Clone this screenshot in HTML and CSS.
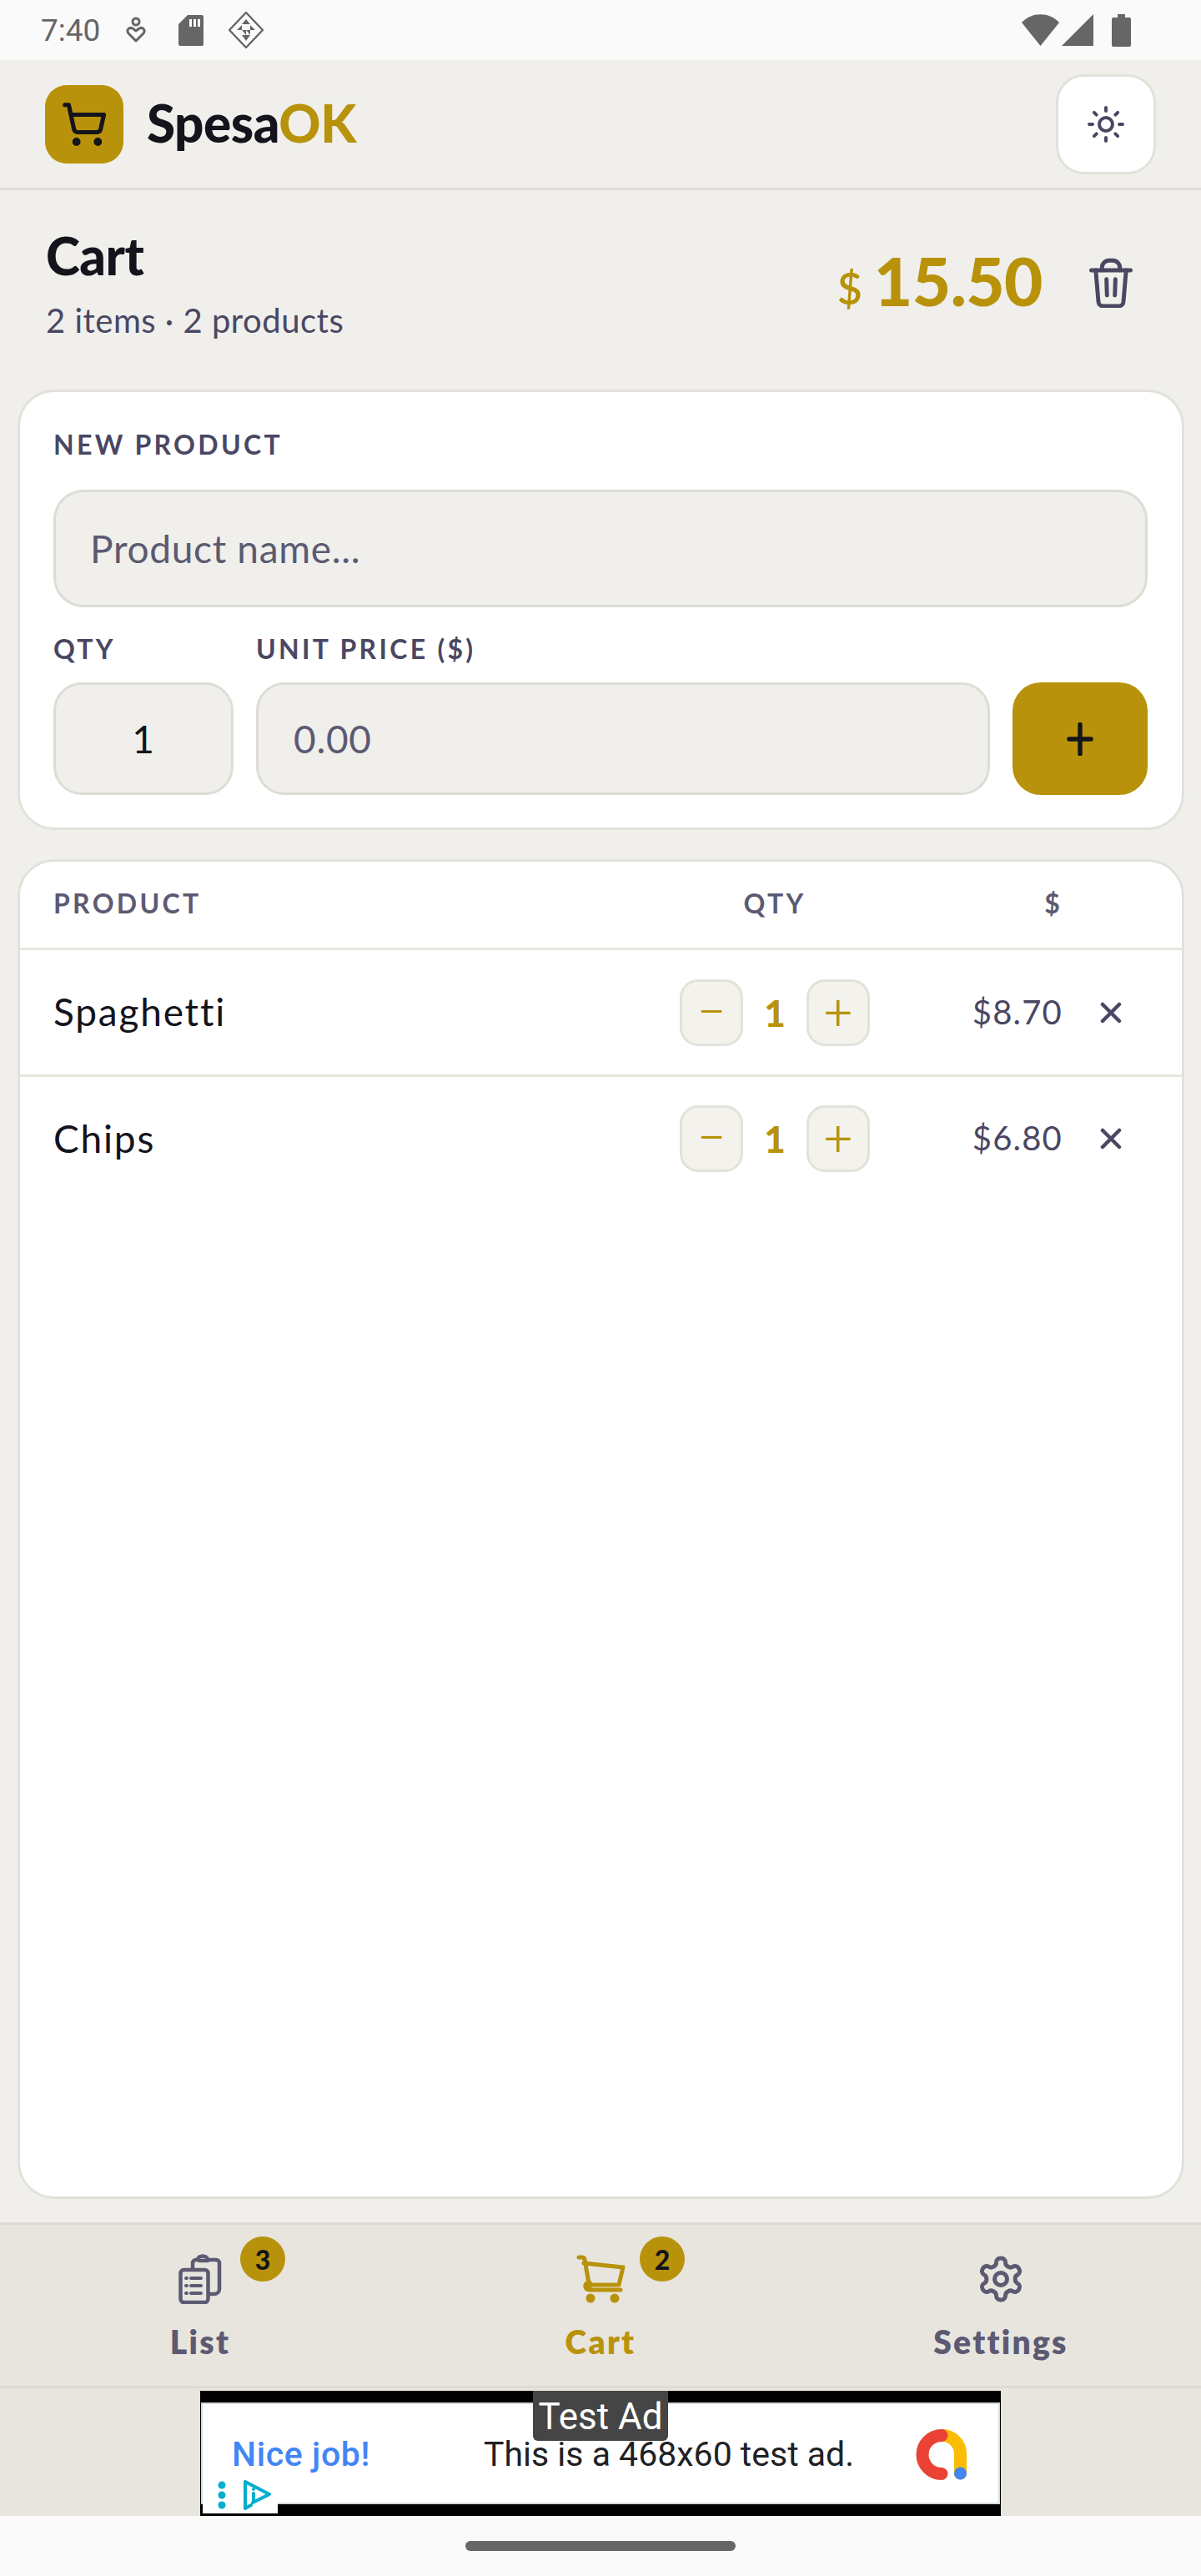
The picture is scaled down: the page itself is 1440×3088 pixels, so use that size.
FILE: index.html
```html
<!DOCTYPE html>
<html lang="en">
<head>
<meta charset="utf-8">
<title>SpesaOK</title>
<link rel="stylesheet" href="styles.css">
</head>
<body>
<div class="app">
  <div class="status">
    <div class="status-left">
      <span class="clock">7:40</span>
      <svg class="st-heart" viewBox="0 0 24 32" fill="none" stroke="#666" stroke-width="3"><circle cx="12" cy="6" r="4"/><path d="M12 29 3 20c-3-4 1-8 5-6l4 3 4-3c4-2 8 2 5 6z" stroke-linejoin="round"/></svg>
      <svg class="st-sim" viewBox="0 0 30 37"><path d="M11 0h17a2 2 0 0 1 2 2v33a2 2 0 0 1-2 2H2a2 2 0 0 1-2-2V11z" fill="#666"/><path d="M13 5h3v9h-3zM18 5h3v9h-3zM23 5h3v9h-3z" fill="#fff"/></svg>
      <svg class="st-diamond" viewBox="0 0 42 44" fill="none" stroke="#666" stroke-width="2.4"><path d="M21 1 41 22 21 43 1 22z" stroke-linejoin="round"/><path d="M21 9l5 6H16zM10 22l6-6v6zM32 22l-6-6v6zM16 22h5v6zM26 22h-5l5 6zM16 28h10l-5 7z" fill="#666" stroke="none"/></svg>
    </div>
    <div class="status-right">
      <svg class="st-wifi" viewBox="0 0 45 38"><path d="M22.500 38 0 10C12-3 33-3 45 10z" fill="#666"/></svg>
      <svg class="st-signal" viewBox="0 0 38 38"><path d="M38 0v38H0z" fill="#666"/></svg>
      <svg class="st-battery" viewBox="0 0 23 39"><path d="M7 0h9v4h5a2 2 0 0 1 2 2v31a2 2 0 0 1-2 2H2a2 2 0 0 1-2-2V6a2 2 0 0 1 2-2h5z" fill="#666"/></svg>
    </div>
  </div>

  <header class="topbar">
    <div class="brand">
      <div class="logo">
        <svg viewBox="0 0 24 24" fill="none" stroke="#14141c" stroke-width="2.200" stroke-linecap="round" stroke-linejoin="round"><circle cx="8" cy="21" r="1"/><circle cx="19" cy="21" r="1"/><path d="M2.050 2.050h2l2.660 12.420a2 2 0 0 0 2 1.580h9.780a2 2 0 0 0 1.950-1.570l1.650-7.430H5.120"/></svg>
      </div>
      <div class="wordmark">Spesa<span class="ok">OK</span></div>
    </div>
    <button class="theme-btn" type="button" aria-label="Theme">
      <svg viewBox="0 0 24 24" fill="none" stroke="#4a4763" stroke-width="2" stroke-linecap="round"><circle cx="12" cy="12" r="4"/><path d="M12 2v2M12 20v2M4.930 4.930l1.410 1.410M17.660 17.660l1.410 1.410M2 12h2M20 12h2M6.340 17.660l-1.410 1.410M19.070 4.930l-1.410 1.410"/></svg>
    </button>
  </header>

  <main class="main">
    <section class="page-head">
      <div>
        <h1 class="page-title">Cart</h1>
        <p class="page-sub">2 items · 2 products</p>
      </div>
      <div class="totals">
        <span class="cur">$</span>
        <span class="total">15.50</span>
        <svg class="trash" viewBox="0 0 24 28" fill="none" stroke="#4a4763" stroke-width="2.300" stroke-linecap="round" stroke-linejoin="round"><path d="M1 7h22"/><path d="M3.500 7l1.500 17.500A2.500 2.500 0 0 0 7.500 27h9a2.500 2.500 0 0 0 2.500-2.500L20.500 7"/><path d="M7 7V5.500A4 4 0 0 1 11 1.500h2a4 4 0 0 1 4 4V7"/><path d="M9.500 12l.3 9M14.500 12l-.3 9"/></svg>
      </div>
    </section>

    <section class="card form-card">
      <div class="label">NEW PRODUCT</div>
      <input class="field field-name" type="text" placeholder="Product name...">
      <div class="form-row">
        <div class="col-qty">
          <div class="label">QTY</div>
          <input class="field field-qty" type="text" value="1">
        </div>
        <div class="col-price">
          <div class="label">UNIT PRICE ($)</div>
          <input class="field field-price" type="text" placeholder="0.00">
        </div>
        <button class="add-btn" type="button" aria-label="Add">
          <svg viewBox="0 0 40 52" fill="none" stroke="#14141c" stroke-width="7" stroke-linecap="round"><path d="M20 3v46M3 26h34"/></svg>
        </button>
      </div>
    </section>

    <section class="card table-card">
      <div class="row head-row">
        <div class="c-name">PRODUCT</div>
        <div class="c-qty">QTY</div>
        <div class="c-price">$</div>
        <div class="c-del"></div>
      </div>
      <div class="row item-row">
        <div class="c-name item-name">Spaghetti</div>
        <div class="c-qty stepper">
          <button class="step" type="button">−</button>
          <span class="step-val">1</span>
          <button class="step" type="button">+</button>
        </div>
        <div class="c-price item-price">$8.70</div>
        <div class="c-del"><svg class="x" viewBox="0 0 26 26" fill="none" stroke="#4a4763" stroke-width="4.500" stroke-linecap="round"><path d="M3 3l20 20M23 3 3 23"/></svg></div>
      </div>
      <div class="row item-row last">
        <div class="c-name item-name">Chips</div>
        <div class="c-qty stepper">
          <button class="step" type="button">−</button>
          <span class="step-val">1</span>
          <button class="step" type="button">+</button>
        </div>
        <div class="c-price item-price">$6.80</div>
        <div class="c-del"><svg class="x" viewBox="0 0 26 26" fill="none" stroke="#4a4763" stroke-width="4.500" stroke-linecap="round"><path d="M3 3l20 20M23 3 3 23"/></svg></div>
      </div>
    </section>
  </main>

  <nav class="tabs">
    <div class="tab">
      <span class="tab-icon">
        <svg class="ic-list" viewBox="0 0 52 60" fill="none" stroke="#5c5a72" stroke-width="4.500" stroke-linecap="round" stroke-linejoin="round"><rect x="2.500" y="19" width="33" height="39" rx="4"/><path d="M17 17v-6a4 4 0 0 1 4-4h2c0-6 12-6 12 0h10a4 4 0 0 1 4 4v31a6 6 0 0 1-6 6h-6"/><path d="M25 8h10"/><path d="M15 29h12M15 38h12M15 47h12M9 29h1M9 38h1M9 47h1" stroke-width="4"/></svg>
        <span class="badge">3</span>
      </span>
      <span class="tab-label">List</span>
    </div>
    <div class="tab active">
      <span class="tab-icon">
        <svg class="ic-cart" viewBox="0 0 60 58" fill="none" stroke="#b8920a" stroke-width="5" stroke-linecap="round" stroke-linejoin="round"><path d="M4 3h4a3 3 0 0 1 3 2.500L17 40"/><path d="M10 10l47 5-5 21H16"/><path d="M17 33c-7 0-7 9 0 9h37"/><circle cx="18" cy="52" r="3" fill="#b8920a"/><circle cx="47" cy="52" r="3" fill="#b8920a"/></svg>
        <span class="badge">2</span>
      </span>
      <span class="tab-label">Cart</span>
    </div>
    <div class="tab">
      <span class="tab-icon">
        <svg class="ic-gear" viewBox="0 0 24 24" fill="none" stroke="#5c5a72" stroke-width="2" stroke-linecap="round" stroke-linejoin="round"><path d="M12.220 2h-.44a2 2 0 0 0-2 2v.18a2 2 0 0 1-1 1.730l-.43.250a2 2 0 0 1-2 0l-.150-.08a2 2 0 0 0-2.730.730l-.220.380a2 2 0 0 0 .730 2.730l.150.100a2 2 0 0 1 1 1.720v.510a2 2 0 0 1-1 1.740l-.150.090a2 2 0 0 0-.730 2.730l.220.380a2 2 0 0 0 2.730.730l.150-.08a2 2 0 0 1 2 0l.430.250a2 2 0 0 1 1 1.730V20a2 2 0 0 0 2 2h.44a2 2 0 0 0 2-2v-.18a2 2 0 0 1 1-1.730l.43-.250a2 2 0 0 1 2 0l.150.080a2 2 0 0 0 2.730-.730l.220-.390a2 2 0 0 0-.730-2.730l-.150-.080a2 2 0 0 1-1-1.740v-.500a2 2 0 0 1 1-1.740l.150-.090a2 2 0 0 0 .730-2.730l-.220-.380a2 2 0 0 0-2.730-.730l-.150.080a2 2 0 0 1-2 0l-.430-.250a2 2 0 0 1-1-1.730V4a2 2 0 0 0-2-2z"/><circle cx="12" cy="12" r="3"/></svg>
      </span>
      <span class="tab-label">Settings</span>
    </div>
  </nav>

  <div class="ad-strip">
    <div class="ad">
      <div class="ad-bar"></div>
      <div class="ad-body">
        <span class="ad-nice">Nice job!</span>
        <span class="ad-text">This is a 468x60 test ad.</span>
        <svg class="ad-logo" viewBox="0 0 62 62" fill="none" stroke-width="15" stroke-linecap="round"><path d="M31 7.500A22 22 0 0 1 53.500 29v24" stroke="#fbbc04"/><path d="M31 53.500a23 23 0 0 1 0-46" stroke="#ea4335"/><circle cx="53.500" cy="53" r="7.500" fill="#4285f4"/></svg>
      </div>
      <div class="ad-bar"></div>
      <span class="ad-tag">Test Ad</span>
      <span class="ad-choices">
        <svg class="ad-dots" viewBox="0 0 10 34" fill="#00aecd"><circle cx="5" cy="5" r="4.500"/><circle cx="5" cy="17" r="4.500"/><circle cx="5" cy="29" r="4.500"/></svg>
        <svg class="ad-tri" viewBox="0 0 36 38" fill="none" stroke="#00aecd" stroke-width="4" stroke-linejoin="round" stroke-linecap="round"><path d="M12 28 32 18 3 3v32l7-4"/><path d="M13 17v9"/><circle cx="13" cy="12" r="1" fill="#00aecd" stroke-width="2"/></svg>
      </span>
    </div>
  </div>

  <div class="gesture"><span class="gesture-bar"></span></div>
</div>
</body>
</html>
```

FILE: styles.css
```css
* { box-sizing: border-box; }
html, body { margin: 0; height: 100%; }
body {
  font-family: "Lato", "Noto Sans", sans-serif;
  color: #14141c;
  background: #f0efeb;
}
button { font-family: inherit; padding: 0; }
.app { display: flex; flex-direction: column; height: 100vh; }

/* status bar */
.status {
  height: 72px;
  flex: none;
  background: #fafafa;
  display: flex;
  justify-content: space-between;
  align-items: center;
  padding: 0 84px 0 49px;
}
.status-left, .status-right { display: flex; align-items: center; }
.clock { font: 400 37px/1 "Roboto", sans-serif; color: #666; width: 102px; }
.st-heart { width: 24px; height: 32px; margin-right: 39px; }
.st-sim { width: 30px; height: 37px; margin-right: 30px; }
.st-diamond { width: 42px; height: 44px; }
.st-wifi { width: 45px; height: 38px; margin-right: 3px; }
.st-signal { width: 38px; height: 38px; margin-right: 22px; }
.st-battery { width: 23px; height: 39px; }

/* top bar */
.topbar {
  height: 156px;
  flex: none;
  display: flex;
  justify-content: space-between;
  align-items: center;
  padding: 0 54px;
  background: #f0efeb;
  border-bottom: 3px solid #dddcd5;
}
.brand { display: flex; align-items: center; gap: 28px; }
.logo {
  width: 94px;
  height: 94px;
  border-radius: 26px;
  background: #b8920a;
  display: flex;
  align-items: center;
  justify-content: center;
}
.logo svg { width: 56px; height: 56px; }
.wordmark { font-size: 62px; font-weight: 900; letter-spacing: -.5px; line-height: 1; margin-top: -4px; }
.ok { color: #b8920a; }
.theme-btn {
  width: 120px;
  height: 120px;
  border-radius: 34px;
  border: 3px solid #e2e1da;
  background: #fff;
  display: flex;
  align-items: center;
  justify-content: center;
}
.theme-btn svg { width: 48px; height: 48px; }

/* page */
.main {
  flex: 1;
  min-height: 0;
  display: flex;
  flex-direction: column;
  padding: 0 20px 28px 21px;
}
.page-head {
  height: 239px;
  flex: none;
  display: flex;
  justify-content: space-between;
  align-items: center;
  padding: 0 62px 18px 34px;
}
.page-title { margin: 0 0 20px; font-size: 62px; font-weight: 900; line-height: 70px; letter-spacing: -.5px; }
.page-sub { margin: 0; font-size: 40px; line-height: 46px; letter-spacing: .5px; color: #4a4763; }
.totals { display: flex; align-items: center; }
.cur { font-size: 52px; font-weight: 600; color: #b8920a; margin: 12px 14px 0 0; }
.total { font-size: 80px; font-weight: 900; color: #b8920a; line-height: 1; margin-right: 56px; letter-spacing: -.5px; margin-top: -5px; }
.trash { width: 52px; height: 60px; }

.card {
  background: #fff;
  border: 3px solid #e2e1da;
  border-radius: 44px;
}
.form-card {
  height: 528px;
  flex: none;
  padding: 45px 41px 0 40px;
  margin-bottom: 35px;
}
.label {
  font-size: 32px;
  font-weight: 700;
  letter-spacing: 3.300px;
  line-height: 36px;
  color: #4a4763;
}
.field {
  display: block;
  width: 100%;
  background: #f0efeb;
  border: 3px solid #dddcd5;
  font-family: inherit;
  letter-spacing: .7px;
  color: #14141c;
  outline: none;
}
.field::placeholder { color: #5c5a72; opacity: 1; }
.field-name {
  height: 141px;
  margin-top: 36px;
  border-radius: 36px;
  padding: 0 41px;
  font-size: 46px;
}
.form-row { display: flex; gap: 27px; margin-top: 32px; align-items: flex-end; }
.col-qty { width: 216px; flex: none; }
.col-price { flex: 1; min-width: 0; }
.field-qty, .field-price { height: 135px; margin-top: 22px; border-radius: 34px; font-size: 46px; }
.field-qty { text-align: center; padding: 0; }
.field-price { padding: 0 42px; }
.add-btn {
  width: 162px;
  height: 135px;
  flex: none;
  border: 0;
  border-radius: 34px;
  background: #b8920a;
  display: flex;
  align-items: center;
  justify-content: center;
}
.add-btn svg { width: 40px; height: 40px; }

.table-card { flex: 1; min-height: 0; overflow: hidden; }
.row { display: flex; align-items: center; padding: 0 40px; }
.head-row {
  height: 106px;
  padding-bottom: 5px;
  border-bottom: 3px solid #e7e6df;
  font-size: 32px;
  font-weight: 700;
  letter-spacing: 3.300px;
  color: #5c5a72;
}
.item-row { height: 152px; border-bottom: 3px solid #e7e6df; }
.item-row.last { height: 148px; border-bottom: 0; }
.c-name { flex: 1; min-width: 0; }
.c-qty { width: 228px; flex: none; text-align: center; margin-right: 66px; position: relative; left: -11px; }
.c-price { width: 163px; flex: none; text-align: right; position: relative; left: -9px; }
.c-del { width: 94px; flex: none; display: flex; justify-content: center; padding-left: 4px; }
.item-name { font-size: 46px; letter-spacing: 1.800px; margin-top: -2px; }
.stepper { display: flex; align-items: center; justify-content: space-between; }
.step {
  width: 76px;
  height: 80px;
  border: 3px solid #e2e1da;
  border-radius: 22px;
  background: #f4f2ec;
  color: #b8920a;
  font: 300 60px/1 "Roboto", sans-serif;
}
.step-val { font-size: 44px; font-weight: 900; color: #b8920a; }
.item-price { font-size: 40px; letter-spacing: 1.200px; color: #4a4763; margin-top: -2px; }
.x { width: 26px; height: 26px; }

/* tabs */
.tabs {
  height: 199px;
  flex: none;
  display: grid;
  grid-template-columns: repeat(3, 1fr);
  background: #e8e5df;
  border-top: 3px solid #dddcd5;
  border-bottom: 3px solid #dddcd5;
}
.tab { display: flex; flex-direction: column; align-items: center; padding-top: 35px; color: #5c5a72; }
.tab.active { color: #b8920a; }
.tab-icon { position: relative; height: 60px; display: flex; align-items: center; justify-content: center; }
.ic-list { width: 52px; height: 60px; }
.ic-cart { width: 60px; height: 58px; }
.ic-gear { width: 60px; height: 60px; }
.badge {
  position: absolute;
  top: -21px;
  left: 74px;
  width: 54px;
  height: 54px;
  border-radius: 50%;
  background: #b8920a;
  color: #14141c;
  font-size: 32px;
  font-weight: 900;
  display: flex;
  align-items: center;
  justify-content: center;
}
.tab.active .badge { left: 77px; }
.tab-label { margin-top: 23px; font-size: 39px; font-weight: 800; line-height: 44px; letter-spacing: 2.300px; }

/* ad */
.ad-strip {
  height: 153px;
  flex: none;
  background: #e8e5df;
  display: flex;
  justify-content: center;
  align-items: flex-end;
}
.ad {
  position: relative;
  width: 960px;
  height: 150px;
  background: #000;
  display: flex;
  flex-direction: column;
}
.ad-bar { height: 14px; flex: none; }
.ad-body {
  flex: 1;
  background: #fff;
  border: 2px solid #d3dadd;
  margin: 0 1px;
  display: flex;
  align-items: center;
  font: 400 41px/1 "Roboto", sans-serif;
  position: relative;
  padding-left: 35px;
  padding-top: 2px;
}
.ad-nice { color: #4285f4; font-weight: 500; letter-spacing: .6px; width: 302px; }
.ad-text { color: #202124; }
.ad-logo { position: absolute; left: 855px; top: 30px; width: 62px; height: 62px; }
.ad-tag {
  position: absolute;
  left: 399px;
  top: 0;
  width: 162px;
  height: 60px;
  border-radius: 0 0 6px 6px;
  background: #454545;
  color: #fff;
  font: 400 44px/62px "Roboto", sans-serif;
  text-align: center;
}
.ad-choices {
  position: absolute;
  left: 3px;
  bottom: 3px;
  width: 90px;
  height: 44px;
  background: #fff;
  display: flex;
  align-items: center;
  gap: 20px;
  padding-left: 18px;
}
.ad-dots { width: 10px; height: 34px; }
.ad-tri { width: 36px; height: 38px; }

.gesture {
  height: 72px;
  flex: none;
  background: #fafafa;
  display: flex;
  justify-content: center;
  padding-top: 30px;
}
.gesture-bar { width: 324px; height: 12px; border-radius: 6px; background: #666; }
```
